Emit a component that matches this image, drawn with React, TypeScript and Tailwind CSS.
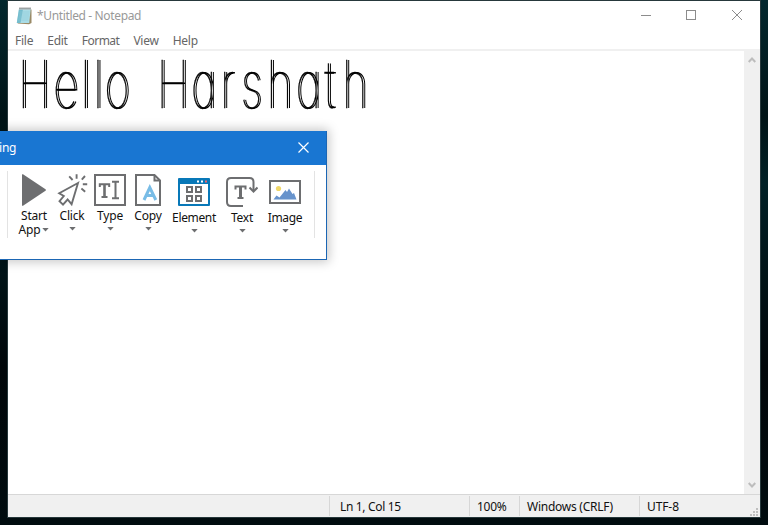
import React from "react";

const ui = "font-['Noto_Sans','Open_Sans',sans-serif]";

function Caret({ className = "" }: { className?: string }) {
  return (
    <svg className={className} width="7" height="4" viewBox="0 0 7 4">
      <path d="M0.3 0h6.4L3.5 3.6z" fill="#6d6e70" />
    </svg>
  );
}

function NotepadIcon() {
  return (
    <svg width="16" height="18" viewBox="0 0 16 18">
      <path d="M14.5 2.5h1V16L13 17.2L1.5 16.4z" fill="#9a8a66" />
      <path d="M3 2h11.7L13.2 16H0.8z" fill="#a9dce6" />
      <path d="M3 2h4L4.5 16H0.8z" fill="#74bccd" />
      <path d="M3.5 5h10M3.2 7h10M3 9h10M2.6 11h10M2.4 13h10" stroke="#8dcbd8" strokeWidth="0.6" />
      <path d="M3 2h11.5" stroke="#d9eef2" strokeWidth="1.6" />
      <path d="M3.5 1.5h11" stroke="#555" strokeWidth="1.8" strokeDasharray="1 1" />
    </svg>
  );
}

function PlayIcon() {
  return (
    <svg width="26" height="32" viewBox="0 0 26 32">
      <path d="M1 0.5Q1 0 2 0.2L24.5 15.2Q25.5 16 24.5 16.8L2 31.8Q1 32 1 31.5z" fill="#6d6e70" />
    </svg>
  );
}

function ClickIcon() {
  return (
    <svg width="28" height="32" viewBox="0 0 28 32" fill="none" stroke="#6d6e70" strokeWidth="1.9" className="overflow-visible">
      <path d="M20 9L1.2 19.2L5.8 22L1.5 27.2L5 30.6L9.6 25.5L13.6 30.2z" />
      <path d="M18.6 0.2v4.6M11.2 2.4l3.4 3.6M27 2l-3.2 3.6M24.8 10.3h4.4M23.4 14.6l3.8 3.2" />
    </svg>
  );
}

function TypeIcon() {
  return (
    <svg width="32" height="32" viewBox="0 0 32 32" fill="none" stroke="#6d6e70">
      <rect x="1" y="1" width="30" height="30" strokeWidth="2" />
      <path d="M5.8 13V10.2H15.2V13M7.5 23h6" strokeWidth="2" />
      <path d="M10.5 10v13" strokeWidth="2.6" />
      <path d="M18 7.8h7M18 24.2h7M21.5 8v16" strokeWidth="2" />
    </svg>
  );
}

function CopyIcon() {
  return (
    <svg width="26" height="32" viewBox="0 0 26 32" fill="none" stroke="#6d6e70" strokeWidth="2">
      <path d="M1 1h18.5L25 6.5V31H1z" />
      <path d="M19.5 1v5.5H25" />
      <path d="M9 26L14.8 13.5L20.8 26M10.8 21.6h8" stroke="#78bce6" strokeWidth="3" />
    </svg>
  );
}

function ElementIcon() {
  return (
    <svg width="32" height="28" viewBox="0 0 32 28" fill="none">
      <rect width="32" height="28" rx="1" fill="#0878b8" />
      <rect x="2" y="6" width="28" height="20" fill="#fff" />
      <path d="M19 3.5h2M23 3.5h2" stroke="#fff" strokeWidth="2" />
      <path d="M27 3.5h2" stroke="#ef646e" strokeWidth="2" />
      <path d="M9 9h5v5H9zM18 9h5v5h-5zM9 18h5v5H9zM18 18h5v5h-5z" stroke="#6d6e70" strokeWidth="2" />
    </svg>
  );
}

function TextIcon() {
  return (
    <svg width="32" height="30" viewBox="0 0 32 30" fill="none" stroke="#6d6e70" strokeWidth="2">
      <path d="M17 29H5Q1 29 1 25V5Q1 1 5 1H23.5Q27.5 1 27.5 5V14" />
      <path d="M23.5 10.5l4 4l4-4" />
      <path d="M9.5 12.5V9.5H19.5V12.5" />
      <path d="M14.5 9v12.5" strokeWidth="3" />
      <path d="M11.5 21h6" />
    </svg>
  );
}

function ImageIcon() {
  return (
    <svg width="32" height="24" viewBox="0 0 32 24">
      <rect x="1" y="1" width="30" height="22" fill="#fff" stroke="#6d6e70" strokeWidth="2" />
      <circle cx="9.5" cy="8.5" r="2.6" fill="#f0d768" />
      <path d="M4.5 19.5L7.5 15.5L10.5 17.5L16.5 10L18 12L20 8.5L23.5 14L25 13L27.5 19.5z" fill="#6793cc" />
    </svg>
  );
}

function Tool({ label, wide, className, children }: { label: string; wide: string; className: string; children: React.ReactNode }) {
  return (
    <div className={`flex flex-col items-center shrink-0 ${className}`}>
      {children}
      <span className={`h-[14px] leading-[14px] whitespace-nowrap ${wide}`}>{label}</span>
      <Caret className="mt-[4px]" />
    </div>
  );
}

function Recorder() {
  return (
    <section className={`absolute left-0 top-[131px] w-[327px] h-[129px] bg-white border-r border-b border-[#1b66b4] shadow-[0_0_10px_2px_rgba(0,0,0,0.22)] flex flex-col text-[12px] tracking-[-0.2px] text-[#111] ${ui}`}>
      <header className="h-[34px] shrink-0 bg-[#1976d2] flex items-center justify-between text-white">
        <span className="-ml-px pb-px">ing</span>
        <svg className="mr-[17px] mb-[2px]" width="11" height="11" viewBox="0 0 11 11">
          <path d="M0.5 0.5l10 10M10.5 0.5l-10 10" stroke="#fff" strokeWidth="1.2" />
        </svg>
      </header>
      <div className="flex items-start pt-[6px] pl-[7px]">
        <i className="w-px h-[67px] bg-[#e3e3e3]" />
        <div className="w-[40px] ml-[6px] pt-[3px] flex flex-col items-center">
          <PlayIcon />
          <span className="h-[14px] mt-[3px] leading-[14px]">Start</span>
          <span className="flex items-center gap-[2px] h-[13px] leading-[13px]">App<Caret /></span>
        </div>
        <Tool label="Click" wide="mt-[3px]" className="w-[32px] ml-[2px] pt-[3px]"><ClickIcon /></Tool>
        <Tool label="Type" wide="mt-[3px]" className="w-[32px] ml-[6px] pt-[3px]"><TypeIcon /></Tool>
        <Tool label="Copy" wide="mt-[3px]" className="w-[32px] ml-[6px] pt-[3px]"><CopyIcon /></Tool>
        <Tool label="Element" wide="mt-[5px] tracking-[-0.35px]" className="w-[44px] ml-[8px] pt-[7px]"><ElementIcon /></Tool>
        <Tool label="Text" wide="mt-[4px]" className="w-[32px] ml-[10px] pt-[6px]"><TextIcon /></Tool>
        <Tool label="Image" wide="mt-[7px] tracking-[-0.3px]" className="w-[34px] ml-[10px] pt-[9px]"><ImageIcon /></Tool>
        <i className="w-px h-[67px] ml-[12px] bg-[#e3e3e3]" />
      </div>
    </section>
  );
}

function Document() {
  return (
    <div className="pl-[10px] whitespace-nowrap">
      <p className="origin-top-left scale-x-[0.66] w-max font-['Inter',sans-serif] font-thin text-[66px] leading-[66px] text-black [-webkit-text-stroke:0.3px_black] [text-shadow:3px_0_0_black] [font-feature-settings:'cv11'] whitespace-pre">
        <span className="tracking-[4.5px]">He</span>
        <span className="tracking-[4.5px]">l</span>
        <span className="tracking-[2.5px]">l</span>
        <span className="tracking-[11.3px]">o </span>
        <span className="tracking-[3px]">H</span>
        <span className="tracking-[6px]">a</span>
        <span className="tracking-[9.5px]">r</span>
        <span className="tracking-[7.5px]">s</span>
        <span className="tracking-[5px]">ha</span>
        <span className="tracking-[11px]">t</span>
        <span>h</span>
      </p>
    </div>
  );
}

export default function App() {
  return (
    <main className="relative w-[768px] h-[525px] overflow-hidden bg-[linear-gradient(180deg,#03282e_0%,#001316_22%,#012126_35%,#011519_50%,#01070a_70%,#000c0f_100%)] pl-2 pt-px">
      <div className={`w-[752px] h-[516px] bg-white flex flex-col text-[12px] tracking-[-0.25px] ring-1 ring-[#26383b] ${ui}`}>
        <header className="h-[30px] shrink-0 flex items-center text-[#999]">
          <span className="ml-[8px] pb-px"><NotepadIcon /></span>
          <span className="ml-[5px] flex-1 tracking-[-0.36px]">*Untitled - Notepad</span>
          <svg className="mr-[18px] mb-[2px]" width="101" height="10" viewBox="0 0 101 10" fill="none" stroke="#8c8c8c">
            <path d="M0 5.5h10" />
            <rect x="45.5" y="0.5" width="9" height="9" />
            <path d="M91 0l10 10M101 0l-10 10" />
          </svg>
        </header>
        <nav className="h-[18px] shrink-0 flex items-center text-[#666] pl-[7px] pt-[2px] gap-[14px] leading-[14px]">
          <span>File</span><span>Edit</span><span className="tracking-[-0.5px]">Format</span><span>View</span><span>Help</span>
        </nav>
        <div className="h-[445px] shrink-0 border-t-2 border-[#f0f0f0] flex">
          <div className="flex-1 min-w-0"><Document /></div>
          <div className="w-4 bg-[#f0f0f0] flex flex-col items-center justify-between py-[6px]">
            <svg width="8" height="6" viewBox="0 0 8 6"><path d="M0.7 5L4 1.5L7.3 5" fill="none" stroke="#bdbdbd" strokeWidth="2" /></svg>
            <svg width="8" height="6" viewBox="0 0 8 6"><path d="M0.7 1L4 4.5L7.3 1" fill="none" stroke="#bdbdbd" strokeWidth="2" /></svg>
          </div>
        </div>
        <footer className="h-[23px] bg-[#f0f0f0] border-t border-[#d7d7d7] flex py-px text-[#111] leading-[21px]">
          <span className="ml-[321px] w-[140px] border-l border-[#d7d7d7] pl-[10px] tracking-[-0.33px]">Ln 1, Col 15</span>
          <span className="w-[50px] border-l border-[#d7d7d7] pl-[7px]">100%</span>
          <span className="w-[120px] border-l border-[#d7d7d7] pl-[7px] whitespace-nowrap">Windows (CRLF)</span>
          <span className="flex-1 border-l border-[#d7d7d7] pl-[7px] tracking-[-0.1px]">UTF-8</span>
          <svg className="self-end mr-[2px]" width="8" height="8" viewBox="0 0 8 8"><path d="M6 0h2v2H6zM3 3h2v2H3zM6 3h2v2H6zM0 6h2v2H0zM3 6h2v2H3zM6 6h2v2H6z" fill="#bfbfbf" /></svg>
        </footer>
      </div>
      <Recorder />
    </main>
  );
}
